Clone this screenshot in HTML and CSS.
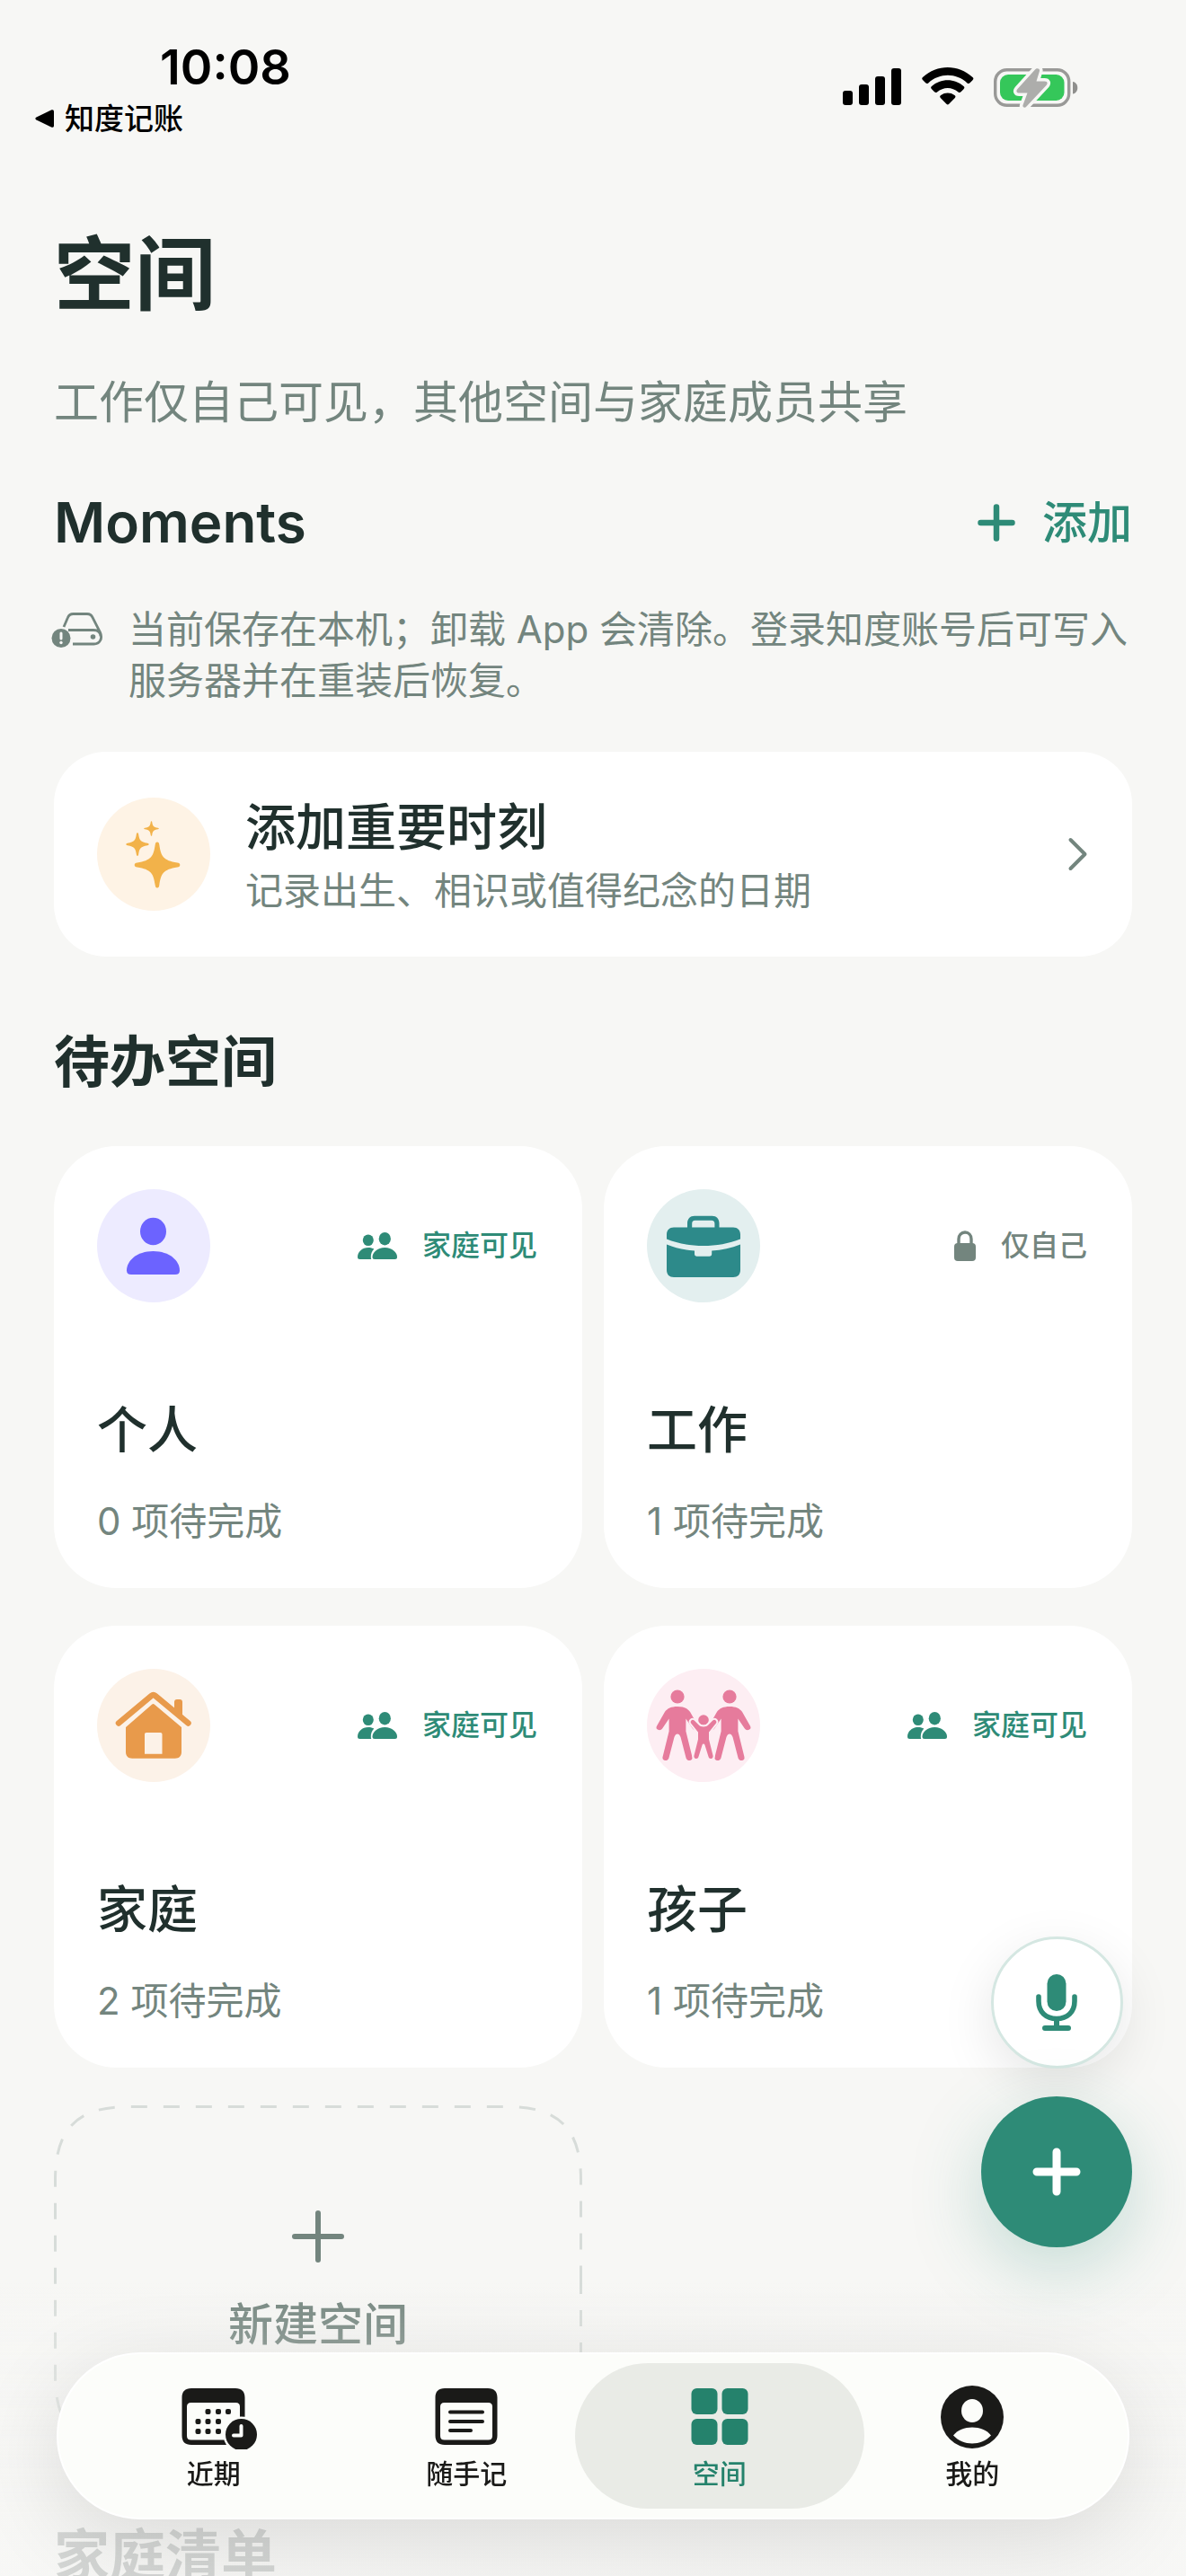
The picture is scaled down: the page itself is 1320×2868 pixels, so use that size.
FILE: index.html
```html
<!DOCTYPE html>
<html lang="zh-CN">
<head>
    <meta charset="UTF-8">
    <meta name="viewport" content="width=device-width, initial-scale=1.0">
    <title>空间</title>
    <link rel="stylesheet" href="styles.css">
</head>
<body>
    <!-- Shared icons -->
    <svg class="sprite" aria-hidden="true">
        <symbol id="icon-people" viewBox="0 0 44 30">
            <ellipse cx="11.8" cy="8.7" rx="6" ry="6.3"/>
            <ellipse cx="30.3" cy="7.2" rx="6.6" ry="7.2"/>
            <path d="M12 17c2.600 0 4.600.5 6.300 1.600-2.400 2.600-3.700 5.800-3.500 9.400 0 .8.2 1.500.5 2H2.500C.8 30 0 29.200 0 27.500 0 22 5 17 12 17z"/>
            <path d="M30.300 17C38.500 17 44 22.500 44 27.500c0 1.700-.8 2.500-2.500 2.500H19c-1.700 0-2.500-.8-2.500-2.500 0-5 5.500-10.500 13.800-10.500z"/>
        </symbol>
        <symbol id="icon-star" viewBox="0 0 52 52">
            <path d="M26 .5c1.600 0 2 1 2.300 3 1.900 13 4.500 17.500 20 20 2 .3 3 1 3 2.500s-1 2.200-3 2.500c-15.500 2.500-18.100 7-20 20-.3 2-.7 3-2.300 3s-2-1-2.300-3c-1.900-13-4.500-17.500-20-20-2-.3-3-1-3-2.500s1-2.200 3-2.500c15.500-2.500 18.100-7 20-20 .3-2 .7-3 2.300-3z"/>
        </symbol>
        <symbol id="icon-adult" viewBox="0 0 46 80" preserveAspectRatio="none">
            <ellipse cx="23" cy="8" rx="6.500" ry="7.600"/>
            <path d="M23 19c6 0 9.500 2 12 6l7.500 15.500c1 2.300.5 3.500-1 4.300-1.700.8-3.300.2-4.300-1.500L31 32.500v14l6 28.500c.5 2.300-.5 3.500-2 4-2 .3-3.300-.7-3.800-2.500L26 53c-.8-2.500-1.800-3.500-3-3.500S20.800 50.500 20 53l-5.200 23.500c-.5 1.800-1.800 2.800-3.800 2.500-1.500-.5-2.500-1.700-2-4L15 46.500v-14L8.800 43.300c-1 1.700-2.600 2.300-4.300 1.500-1.500-.8-2-2-1-4.300L11 25c2.500-4 6-6 12-6z"/>
        </symbol>
    </svg>

    <header class="status-bar">
        <div class="status-left">
            <div class="status-time">10:08</div>
            <a class="status-back" href="#">
                <svg width="22" height="22" viewBox="0 0 22 22"><path d="M19 1.500 2.500 9.500c-1.600.8-1.600 2.200 0 3L19 20.500c1.700.8 3 .2 3-1.800V3.300c0-2-1.300-2.600-3-1.800z"/></svg>
                知度记账
            </a>
        </div>
        <div class="status-icons">
            <svg width="66" height="43" viewBox="0 0 66 43">
                <rect x="0" y="26" width="11" height="16" rx="3"/>
                <rect x="18" y="19" width="11" height="23" rx="3"/>
                <rect x="36" y="10" width="11" height="32" rx="3"/>
                <rect x="54" y="1" width="11" height="41" rx="3"/>
            </svg>
            <svg width="58" height="43" viewBox="0 0 58 43">
                <path d="M1.200 14.300C-.1 13-.1 12 1 11 17-3.600 40.500-3.600 56.500 11c1.200 1 1.200 2 0 3.300l-3 3c-1 1-2 1-3 .1C38 5.900 20 5.900 7.200 17.400c-1 .9-2 .9-3-.1z"/>
                <path d="M11 24.200c-1.200-1.200-1.200-2.200 0-3.200 10-9 25.500-9 35.500 0 1.200 1 1.200 2 0 3.200l-3 3.100c-1 1-2 1-3 .1-7-6-16.500-6-23.500 0-1 .9-2 .9-3-.1z"/>
                <path d="M21 34.200c-1.200-1.200-1.200-2.200.2-3.200 4.500-3.300 10.700-3.300 15.200 0 1.400 1 1.400 2 .2 3.200l-6.400 6.500c-1 1-1.800 1-2.800 0z"/>
            </svg>
            <svg width="94" height="45" viewBox="0 0 94 45">
                <rect x="1.700" y="2.700" width="82" height="39.600" rx="13" fill="none" stroke="#999997" stroke-width="3.400"/>
                <rect x="7" y="8" width="71.500" height="29" rx="9" fill="#35c75a"/>
                <path d="M88 16c7 1 7 12.500 0 13.500z" fill="#8f8f8d"/>
                <path d="M46 2.500 26.500 24c-2 2.300-1.300 4.500 2 4.500h9L32.500 42c-.8 2.500 2 3.800 4 1.500L58.500 20c2-2.500 1.300-4.500-2-4.500h-9L51 4c.7-2.500-3-4-5-1.500z" fill="#adadab" stroke="#f7f7f5" stroke-width="7" paint-order="stroke"/>
            </svg>
        </div>
    </header>

    <main class="page">
        <h1 class="page-title">空间</h1>
        <p class="page-subtitle">工作仅自己可见，其他空间与家庭成员共享</p>

        <div class="section-head">
            <h2 class="section-title">Moments</h2>
            <button class="add-btn" type="button">
                <svg width="42" height="42" viewBox="0 0 42 42"><path d="M21 3.500v35M3.500 21h35" fill="none" stroke="currentColor" stroke-width="6.500" stroke-linecap="round"/></svg>
                添加
            </button>
        </div>

        <div class="notice">
            <svg class="notice-icon" width="58" height="40" viewBox="0 0 58 40">
                <path d="M14 16 18.500 5.500C19.700 2.500 21.500 1.500 24.500 1.500h15.500c3 0 4.800 1 6 4L54.500 22c3 7-.5 13-7 13H24M19 19.500h28c5 0 8 2.500 8 7" fill="none" stroke="currentColor" stroke-width="2.800"/>
                <circle cx="46.500" cy="27" r="2.800" fill="currentColor"/>
                <circle cx="11" cy="28.500" r="10.500" fill="currentColor"/>
                <path d="M11 23v6" stroke="#f7f7f5" stroke-width="3" stroke-linecap="round"/>
                <circle cx="11" cy="33.500" r="1.700" fill="#f7f7f5"/>
            </svg>
            <p>当前保存在本机；卸载 App 会清除。登录知度账号后可写入服务器并在重装后恢复。</p>
        </div>

        <a class="moment-card" href="#">
            <span class="circle circle-yellow">
                <svg viewBox="0 0 126 126">
                    <use href="#icon-star" x="41" y="49" width="52" height="52"/>
                    <use href="#icon-star" x="32" y="39" width="26" height="26"/>
                    <use href="#icon-star" x="52" y="26" width="17" height="17"/>
                </svg>
            </span>
            <span class="moment-text">
                <span class="moment-title">添加重要时刻</span>
                <span class="moment-desc">记录出生、相识或值得纪念的日期</span>
            </span>
            <svg class="chevron" width="24" height="38" viewBox="0 0 24 38"><path d="M3.500 3 19.500 19 3.500 35" fill="none" stroke="currentColor" stroke-width="4" stroke-linecap="round" stroke-linejoin="round"/></svg>
        </a>

        <h2 class="section-title spaces-title">待办空间</h2>

        <div class="space-grid">
            <a class="space-card" href="#">
                <span class="space-head">
                    <span class="circle circle-purple">
                        <svg viewBox="0 0 126 126">
                            <ellipse cx="62.500" cy="47" rx="14.500" ry="15.300"/>
                            <path d="M62.500 69C81 69 92 80 92 90.500c0 3-1.700 4.500-5 4.500H38c-3.300 0-5-1.500-5-4.500C33 80 44 69 62.500 69z"/>
                        </svg>
                    </span>
                    <span class="tag tag-green"><svg width="44" height="30"><use href="#icon-people"/></svg>家庭可见</span>
                </span>
                <span class="space-name">个人</span>
                <span class="space-count">0 项待完成</span>
            </a>

            <a class="space-card" href="#">
                <span class="space-head">
                    <span class="circle circle-teal">
                        <svg viewBox="0 0 126 126">
                            <path d="M45 42.500V38c0-5 3-8.300 8-8.300h19.500c5 0 8 3.300 8 8.300v4.500H96c5 0 8 3 8 8v5C79 65.500 46.500 65.500 22 55.500v-5c0-5 3-8 8-8zm5.200 0h25.200v-4c0-2.500-1.200-3.700-3.500-3.700H53.500c-2.200 0-3.300 1.200-3.300 3.700z"/>
                            <path d="M22 61.500c10 4 20 6.300 31 7v3.500c0 1.700 1 2.700 2.700 2.700h13.800c1.700 0 2.700-1 2.700-2.700v-3.500c11-.7 21.800-3 31.800-7V90c0 5-3 8-8 8H30c-5 0-8-3-8-8z"/>
                        </svg>
                    </span>
                    <span class="tag tag-gray">
                        <svg width="24" height="34" viewBox="0 0 24 34">
                            <rect x="0" y="14" width="24" height="20" rx="4"/>
                            <path d="M5 16V9.500C5 5 8 2 12 2s7 3 7 7.500V16" fill="none" stroke="currentColor" stroke-width="3.400"/>
                        </svg>仅自己
                    </span>
                </span>
                <span class="space-name">工作</span>
                <span class="space-count">1 项待完成</span>
            </a>

            <a class="space-card" href="#">
                <span class="space-head">
                    <span class="circle circle-orange">
                        <svg viewBox="0 0 126 126">
                            <path d="M24 60.500 60.500 30c1.500-1.300 2.800-1.300 4.300 0L101.500 60.500" fill="none" stroke="currentColor" stroke-width="6.500" stroke-linecap="round"/>
                            <path d="M86 46V37c0-2 1-3 3-3h3c2 0 3 1 3 3v18z"/>
                            <path fill-rule="evenodd" d="M61 39.700c1-.8 2-.8 3 0L94 65v27.500c0 4.700-2.500 7.200-7.200 7.200h-47.600C34.500 99.700 32 97.200 32 92.500V65zM55 71c-1.300 0-2 .7-2 2v21.700h19.500V73c0-1.300-.7-2-2-2z"/>
                        </svg>
                    </span>
                    <span class="tag tag-green"><svg width="44" height="30"><use href="#icon-people"/></svg>家庭可见</span>
                </span>
                <span class="space-name">家庭</span>
                <span class="space-count">2 项待完成</span>
            </a>

            <a class="space-card" href="#">
                <span class="space-head">
                    <span class="circle circle-pink">
                        <svg viewBox="0 0 126 126">
                            <use href="#icon-adult" x="7" y="23" width="54" height="80"/>
                            <use href="#icon-adult" x="65" y="23" width="54" height="80"/>
                            <g stroke="#fdeef3" stroke-width="4" paint-order="stroke">
                                <circle cx="63" cy="57" r="5.800"/>
                                <path d="M63 64.500c2.500 0 4.200-.7 5.500-2.200l4.500-4.500c1.300-1.300 2.600-1.300 3.600-.4 1 1 1 2.300 0 3.600L69 70.500v8l4.500 18c.4 2-.3 3.100-1.800 3.500-1.700.3-2.700-.5-3.200-2.200L64.500 85c-.5-2-2.500-2-3 0l-4 12.800c-.5 1.700-1.500 2.500-3.200 2.200-1.500-.4-2.200-1.500-1.800-3.500l4.500-18v-8L49.400 61c-1-1.300-1-2.600 0-3.600 1-.9 2.300-.9 3.600.4l4.500 4.500c1.300 1.500 3 2.200 5.500 2.200z"/>
                            </g>
                        </svg>
                    </span>
                    <span class="tag tag-green"><svg width="44" height="30"><use href="#icon-people"/></svg>家庭可见</span>
                </span>
                <span class="space-name">孩子</span>
                <span class="space-count">1 项待完成</span>
            </a>

            <button class="new-space" type="button">
                <svg class="new-space-border" viewBox="0 0 588 384" preserveAspectRatio="none">
                    <path d="M586.500 192V301C586.500 358 562 382.500 505 382.500H83C26 382.500 1.500 358 1.500 301V83C1.500 26 26 1.500 83 1.500H505C562 1.500 586.500 26 586.500 83V192"/>
                </svg>
                <svg width="60" height="60" viewBox="0 0 60 60"><path d="M30 4v52M4 30h52" fill="none" stroke="currentColor" stroke-width="6" stroke-linecap="round"/></svg>
                新建空间
            </button>
        </div>

        <h2 class="section-title list-title">家庭清单</h2>
    </main>

    <div class="bottom-fade"></div>

    <div class="fab-stack">
        <button class="fab fab-mic" type="button" aria-label="语音">
            <svg width="46" height="64" viewBox="0 0 46 64">
                <rect x="12.500" y="0" width="21" height="41" rx="10.500"/>
                <path d="M3 25v5c0 12 8 19.500 20 19.500S43 42 43 30v-5" fill="none" stroke="currentColor" stroke-width="5.600" stroke-linecap="round"/>
                <path d="M23 50v9M10 60h26" fill="none" stroke="currentColor" stroke-width="6" stroke-linecap="round"/>
            </svg>
        </button>
        <button class="fab fab-add" type="button" aria-label="新建">
            <svg width="54" height="54" viewBox="0 0 54 54"><path d="M27 5v44M5 27h44" fill="none" stroke="currentColor" stroke-width="9" stroke-linecap="round"/></svg>
        </button>
    </div>

    <nav class="tab-bar">
        <a class="tab" href="#">
            <svg width="96" height="72" viewBox="0 0 96 72">
                <path fill-rule="evenodd" d="M23 4h49c7 0 10.500 3.500 10.500 10.500V36c-8 .5-16 5-19 13-2 6-1.500 13 1.500 18H23c-7 0-10.500-3.500-10.500-10.500v-42C12.500 7.500 16 4 23 4zm-.5 16c-3 0-4.500 1.500-4.500 4.500V57c0 3 1.500 4.500 4.500 4.500H61c-.5-9 2-15 7-19 3-2.500 6-4 9-4.500V24.500c0-3-1.500-4.500-4.500-4.500z"/>
                <g>
                    <rect x="38.500" y="27" width="6" height="6" rx="2"/><rect x="50" y="27" width="6" height="6" rx="2"/><rect x="61" y="27" width="6" height="6" rx="2"/>
                    <rect x="27.500" y="38" width="6" height="6" rx="2"/><rect x="38.500" y="38" width="6" height="6" rx="2"/><rect x="50" y="38" width="6" height="6" rx="2"/>
                    <rect x="27.500" y="49" width="6" height="6" rx="2"/><rect x="38.500" y="49" width="6" height="6" rx="2"/><rect x="50" y="49" width="6" height="6" rx="2"/>
                </g>
                <circle cx="78.500" cy="55.500" r="17.500" stroke="#fcfdfa" stroke-width="5" paint-order="stroke"/>
                <path d="M78.500 46v10.500H70" fill="none" stroke="#fcfdfa" stroke-width="4" stroke-linecap="round" stroke-linejoin="round"/>
            </svg>
            近期
        </a>
        <a class="tab" href="#">
            <svg width="96" height="72" viewBox="0 0 96 72">
                <path fill-rule="evenodd" d="M24 4h48c7 0 10.500 3.500 10.500 10.500v42C82.500 63.500 79 67 72 67H24c-7 0-10.500-3.500-10.500-10.500v-42C13.500 7.500 17 4 24 4zm-.5 16c-3 0-4.500 1.500-4.500 4.500V57c0 3 1.500 4.500 4.500 4.500h49c3 0 4.500-1.500 4.500-4.500V24.500c0-3-1.500-4.500-4.500-4.500z"/>
                <path d="M30 30.500h36M30 41h36M30 51h23" fill="none" stroke="currentColor" stroke-width="4" stroke-linecap="round"/>
            </svg>
            随手记
        </a>
        <a class="tab tab-active" href="#" aria-current="page">
            <svg width="96" height="72" viewBox="0 0 96 72">
                <rect x="16.500" y="4" width="29" height="29" rx="6"/><rect x="50.500" y="4" width="29" height="29" rx="6"/>
                <rect x="16.500" y="38" width="29" height="29" rx="6"/><rect x="50.500" y="38" width="29" height="29" rx="6"/>
            </svg>
            空间
        </a>
        <a class="tab" href="#">
            <svg width="96" height="72" viewBox="0 0 96 72">
                <circle cx="48" cy="36" r="35"/>
                <ellipse cx="48" cy="29" rx="12" ry="13" fill="#fcfdfa"/>
                <path d="M27 56.500C36 44.500 60 44.500 69 56.500 58 68.500 38 68.500 27 56.500z" fill="#fcfdfa"/>
            </svg>
            我的
        </a>
    </nav>
</body>
</html>
```
FILE: styles.css
```css
* {
    box-sizing: border-box;
}
body {
    margin: 0;
    height: 100vh;
    overflow: hidden;
    display: flex;
    flex-direction: column;
    font-family: Inter, "Noto Sans CJK SC", sans-serif;
    background-color: #f7f7f5;
    color: #20302d;
}
a {
    color: inherit;
    text-decoration: none;
}
button {
    font-family: inherit;
    border: none;
    background: none;
    padding: 0;
    cursor: pointer;
}
h1, h2, p {
    margin: 0;
}
svg {
    display: block;
    flex-shrink: 0;
    fill: currentColor;
}
.sprite {
    position: absolute;
    width: 0;
    height: 0;
}

/* Status bar */
.status-bar {
    display: flex;
    justify-content: space-between;
    flex-shrink: 0;
    padding: 42px 120px 0 38px;
    height: 196px;
    color: #000;
}
.status-left {
    display: flex;
    flex-direction: column;
}
.status-time {
    padding-left: 140px;
    font-size: 54px;
    line-height: 66px;
    font-weight: 600;
}
.status-back {
    display: flex;
    align-items: center;
    gap: 12px;
    font-size: 33px;
    line-height: 48px;
    font-weight: 500;
}
.status-icons {
    display: flex;
    align-items: flex-start;
    gap: 22px;
    padding-top: 33px;
}

/* Page */
.page {
    flex: 1;
    min-height: 0;
    overflow: hidden;
    padding: 50px 60px 0;
}
.page-title {
    font-size: 90px;
    line-height: 120px;
    font-weight: 700;
}
.page-subtitle {
    margin-top: 46px;
    font-size: 50px;
    line-height: 72px;
    color: #73857e;
}
.section-head {
    display: flex;
    justify-content: space-between;
    align-items: center;
    margin-top: 56px;
}
.section-title {
    font-size: 62px;
    line-height: 84px;
    font-weight: 600;
}
.add-btn {
    display: flex;
    align-items: center;
    gap: 30px;
    font-size: 50px;
    line-height: 72px;
    font-weight: 500;
    color: #2e8b77;
}
.notice {
    display: flex;
    gap: 28px;
    margin: 48px 0 51px -3px;
    font-size: 42px;
    line-height: 57px;
    color: #73857e;
}
.notice-icon {
    margin-top: 10px;
}
.circle {
    width: 126px;
    height: 126px;
    border-radius: 50%;
    flex-shrink: 0;
}
.circle-yellow {
    color: #f2b24a;
    background-color: #fef3e5;
}
.circle-purple {
    color: #6c63ff;
    background-color: #edebff;
}
.circle-teal {
    color: #2d8a8a;
    background-color: #e3efef;
}
.circle-orange {
    color: #e89a4b;
    background-color: #fcf2e8;
}
.circle-pink {
    color: #e67b9c;
    background-color: #fdeef3;
}
.moment-card {
    display: flex;
    align-items: center;
    gap: 39px;
    min-height: 228px;
    padding: 42px 48px;
    border-radius: 58px;
    background-color: #fff;
}
.moment-text {
    display: flex;
    flex-direction: column;
    flex: 1;
    gap: 2px;
}
.moment-title {
    font-size: 56px;
    line-height: 80px;
    font-weight: 500;
}
.moment-desc {
    font-size: 42px;
    line-height: 58px;
    color: #73857e;
}
.chevron {
    color: #73857e;
}
.spaces-title {
    margin-top: 76px;
}

/* Space cards */
.space-grid {
    display: grid;
    grid-template-columns: 1fr 1fr;
    gap: 42px 24px;
    margin-top: 51px;
}
.space-card {
    display: flex;
    flex-direction: column;
    padding: 48px;
    border-radius: 70px;
    background-color: #fff;
}
.space-head {
    display: flex;
    justify-content: space-between;
    align-items: center;
}
.tag {
    display: flex;
    align-items: center;
    gap: 28px;
    padding-right: 2px;
    font-size: 32px;
    line-height: 40px;
    font-weight: 500;
}
.tag-green {
    color: #2e8b77;
}
.tag-gray {
    color: #73857e;
}
.space-name {
    margin-top: 104px;
    font-size: 56px;
    line-height: 76px;
    font-weight: 500;
}
.space-count {
    margin-top: 38px;
    font-size: 42px;
    line-height: 52px;
    color: #73857e;
}
.new-space {
    position: relative;
    display: flex;
    flex-direction: column;
    align-items: center;
    justify-content: center;
    gap: 32px;
    min-height: 384px;
    padding-top: 12px;
    font-size: 50px;
    line-height: 72px;
    font-weight: 500;
    color: #73857e;
}
.new-space-border {
    position: absolute;
    inset: 0;
    width: 100%;
    height: 100%;
}
.new-space-border path {
    fill: none;
    stroke: #d7dcd9;
    stroke-width: 3;
    stroke-dasharray: 18;
    vector-effect: non-scaling-stroke;
}
.list-title {
    margin-top: 76px;
}

/* Floating layers */
.bottom-fade {
    position: fixed;
    left: 0;
    right: 0;
    bottom: 0;
    height: 330px;
    background: linear-gradient(rgba(247, 247, 245, 0), rgba(247, 247, 245, 0.84) 80%);
    pointer-events: none;
}
.fab-stack {
    position: fixed;
    right: 60px;
    bottom: 366px;
    display: flex;
    flex-direction: column;
    align-items: center;
    gap: 31px;
}
.fab {
    display: flex;
    align-items: center;
    justify-content: center;
    border-radius: 50%;
}
.fab-mic {
    width: 147px;
    height: 147px;
    border: 3px solid #d5e7e2;
    background-color: #fff;
    color: #2e8b77;
    box-shadow: 0 18px 60px rgba(0, 0, 0, 0.1);
}
.fab-add {
    width: 168px;
    height: 168px;
    background-color: #2e8b77;
    color: #fff;
    box-shadow: 0 24px 80px rgba(46, 139, 119, 0.26);
}
.tab-bar {
    position: fixed;
    left: 63px;
    right: 63px;
    bottom: 63px;
    display: flex;
    height: 186px;
    padding: 12px 32px;
    border: 2px solid #fff;
    border-radius: 93px;
    background-color: #fcfdfa;
    box-shadow: 0 24px 100px rgba(0, 0, 0, 0.12);
}
.tab {
    position: relative;
    flex: 1;
    display: flex;
    flex-direction: column;
    align-items: center;
    gap: 7px;
    padding-top: 22px;
    font-size: 30px;
    line-height: 40px;
    font-weight: 500;
    color: #1a1a18;
}
.tab-active {
    z-index: 0;
    color: #25826c;
}
.tab-active::before {
    content: "";
    position: absolute;
    inset: -2px -20px;
    z-index: -1;
    border-radius: 81px;
    background-color: #e9ebe6;
}
```
